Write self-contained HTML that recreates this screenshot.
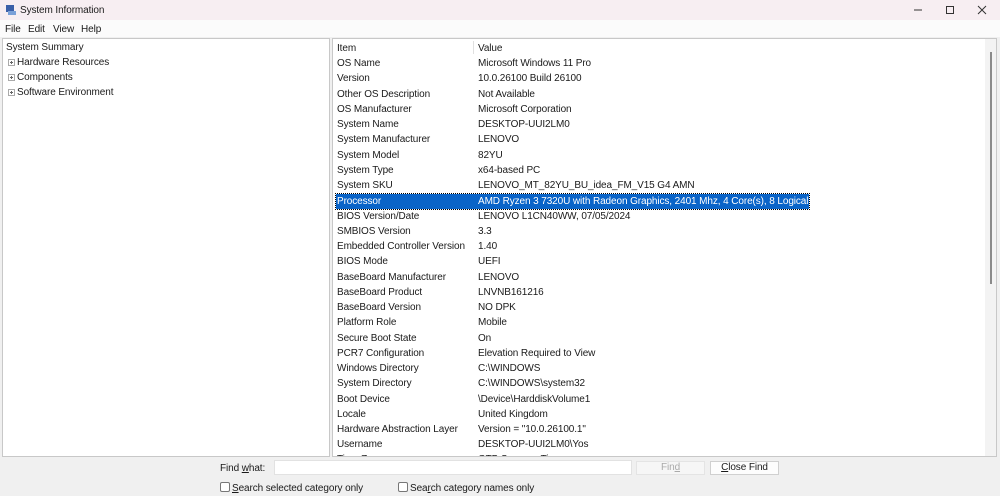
<!DOCTYPE html>
<html><head><meta charset="utf-8"><style>
*{margin:0;padding:0;box-sizing:border-box}
body{width:1000px;height:496px;background:#f0f0f0;font-family:"Liberation Sans",sans-serif;font-size:10px;letter-spacing:-0.1px;color:#1a1a1a;position:relative;overflow:hidden}
.title{position:absolute;left:0;top:0;width:1000px;height:20px;background:#f7eef2}
.title span{position:absolute;left:20px;top:5px}
.menu{position:absolute;left:0;top:20px;width:1000px;height:17px;background:#fbfbfb}
.menu span{position:absolute;top:4px}
.left{position:absolute;left:2px;top:38px;width:328px;height:419px;background:#fff;border:1px solid #c8c8c8}
.left div{position:absolute;white-space:nowrap}
.pl{position:absolute;width:7px;height:7px;border:1px solid #aaa;font-size:0}
.pl:after{content:"";position:absolute;left:1px;top:2px;width:3px;height:1px;background:#666}
.pl:before{content:"";position:absolute;left:2px;top:1px;width:1px;height:3px;background:#666}
.right{position:absolute;left:332px;top:38px;width:665px;height:419px;background:#fff;border:1px solid #c8c8c8;overflow:hidden}
.row{position:absolute;left:0;height:15px;width:650px;white-space:nowrap}
.row .a{position:absolute;left:4px;top:2px}
.row .b{position:absolute;left:145px;top:2px}
.sel{background:#0a64c8;color:#fff;outline:1px dotted #000;left:3px;width:473px}
.sel .a{left:1px}.sel .b{left:142px}
.sb{position:absolute;right:0;top:0;width:11px;height:100%;background:#f3f3f3}
.sb div{position:absolute;left:5px;top:13px;width:2px;height:232px;background:#8a8a8a}
.bot span{position:absolute;white-space:nowrap}
.btn{position:absolute;height:14px;background:#fdfdfd;border:1px solid #d0d0d0;text-align:center;line-height:12px}
.cb{display:inline-block;width:10px;height:10px;border:1px solid #777;border-radius:2px;vertical-align:-1px;margin-right:2px;background:#fff}
</style></head><body>
<div class="title">
<svg style="position:absolute;left:5px;top:4px" width="12" height="12"><rect x="1" y="1" width="8" height="7" fill="#3a5fa8"/><rect x="3" y="7" width="8" height="4" fill="#7aa0d8"/></svg>
<span>System Information</span>
<svg style="position:absolute;left:910px;top:5px" width="80" height="10"><line x1="4" y1="5" x2="12" y2="5" stroke="#333"/><rect x="36.5" y="1.5" width="7" height="7" fill="none" stroke="#333"/><path d="M68 1L76 9M76 1L68 9" stroke="#333"/></svg>
</div>
<div class="menu"><span style="left:5px">File</span><span style="left:28px">Edit</span><span style="left:53px">View</span><span style="left:81px">Help</span></div>
<div class="left">
<div style="left:3px;top:3px">System Summary</div>
<span class="pl" style="left:5px;top:20px"></span><div style="left:14px;top:18px">Hardware Resources</div>
<span class="pl" style="left:5px;top:35px"></span><div style="left:14px;top:33px">Components</div>
<span class="pl" style="left:5px;top:50px"></span><div style="left:14px;top:48px">Software Environment</div>
</div>
<div class="right">
<div style="position:absolute;left:140px;top:2px;width:1px;height:13px;background:#e0e0e0"></div>
<div class="row" style="top:2px"><span class="a">Item</span><span class="b">Value</span></div>
<div class="row" style="top:17px"><span class="a">OS Name</span><span class="b">Microsoft Windows 11 Pro</span></div>
<div class="row" style="top:32px"><span class="a">Version</span><span class="b">10.0.26100 Build 26100</span></div>
<div class="row" style="top:48px"><span class="a">Other OS Description</span><span class="b">Not Available</span></div>
<div class="row" style="top:63px"><span class="a">OS Manufacturer</span><span class="b">Microsoft Corporation</span></div>
<div class="row" style="top:78px"><span class="a">System Name</span><span class="b">DESKTOP-UUI2LM0</span></div>
<div class="row" style="top:93px"><span class="a">System Manufacturer</span><span class="b">LENOVO</span></div>
<div class="row" style="top:109px"><span class="a">System Model</span><span class="b">82YU</span></div>
<div class="row" style="top:124px"><span class="a">System Type</span><span class="b">x64-based PC</span></div>
<div class="row" style="top:139px"><span class="a">System SKU</span><span class="b">LENOVO_MT_82YU_BU_idea_FM_V15 G4 AMN</span></div>
<div class="row sel" style="top:155px"><span class="a">Processor</span><span class="b">AMD Ryzen 3 7320U with Radeon Graphics, 2401 Mhz, 4 Core(s), 8 Logical ...</span></div>
<div class="row" style="top:170px"><span class="a">BIOS Version/Date</span><span class="b">LENOVO L1CN40WW, 07/05/2024</span></div>
<div class="row" style="top:185px"><span class="a">SMBIOS Version</span><span class="b">3.3</span></div>
<div class="row" style="top:200px"><span class="a">Embedded Controller Version</span><span class="b">1.40</span></div>
<div class="row" style="top:215px"><span class="a">BIOS Mode</span><span class="b">UEFI</span></div>
<div class="row" style="top:231px"><span class="a">BaseBoard Manufacturer</span><span class="b">LENOVO</span></div>
<div class="row" style="top:246px"><span class="a">BaseBoard Product</span><span class="b">LNVNB161216</span></div>
<div class="row" style="top:261px"><span class="a">BaseBoard Version</span><span class="b">NO DPK</span></div>
<div class="row" style="top:276px"><span class="a">Platform Role</span><span class="b">Mobile</span></div>
<div class="row" style="top:292px"><span class="a">Secure Boot State</span><span class="b">On</span></div>
<div class="row" style="top:307px"><span class="a">PCR7 Configuration</span><span class="b">Elevation Required to View</span></div>
<div class="row" style="top:322px"><span class="a">Windows Directory</span><span class="b">C:\WINDOWS</span></div>
<div class="row" style="top:337px"><span class="a">System Directory</span><span class="b">C:\WINDOWS\system32</span></div>
<div class="row" style="top:353px"><span class="a">Boot Device</span><span class="b">\Device\HarddiskVolume1</span></div>
<div class="row" style="top:368px"><span class="a">Locale</span><span class="b">United Kingdom</span></div>
<div class="row" style="top:383px"><span class="a">Hardware Abstraction Layer</span><span class="b">Version = "10.0.26100.1"</span></div>
<div class="row" style="top:398px"><span class="a">Username</span><span class="b">DESKTOP-UUI2LM0\Yos</span></div>
<div class="row" style="top:413px"><span class="a">Time Zone</span><span class="b">GTB Summer Time</span></div>
<div class="sb"><div></div></div>
</div>
<div class="bot">
<span style="left:220px;top:463px">Find <u>w</u>hat:</span>
<div style="position:absolute;left:274px;top:460px;width:358px;height:15px;background:#fff;border:1px solid #e2e2e2"></div>
<div class="btn" style="left:636px;top:461px;width:69px;color:#aaa;background:#f6f6f6;border-color:#e4e4e4">Fin<u>d</u></div>
<div class="btn" style="left:710px;top:461px;width:69px"><u>C</u>lose Find</div>
<span style="left:220px;top:482px"><i class="cb"></i><u>S</u>earch selected category only</span>
<span style="left:398px;top:482px"><i class="cb"></i>Sea<u>r</u>ch category names only</span>
</div>
</body></html>
